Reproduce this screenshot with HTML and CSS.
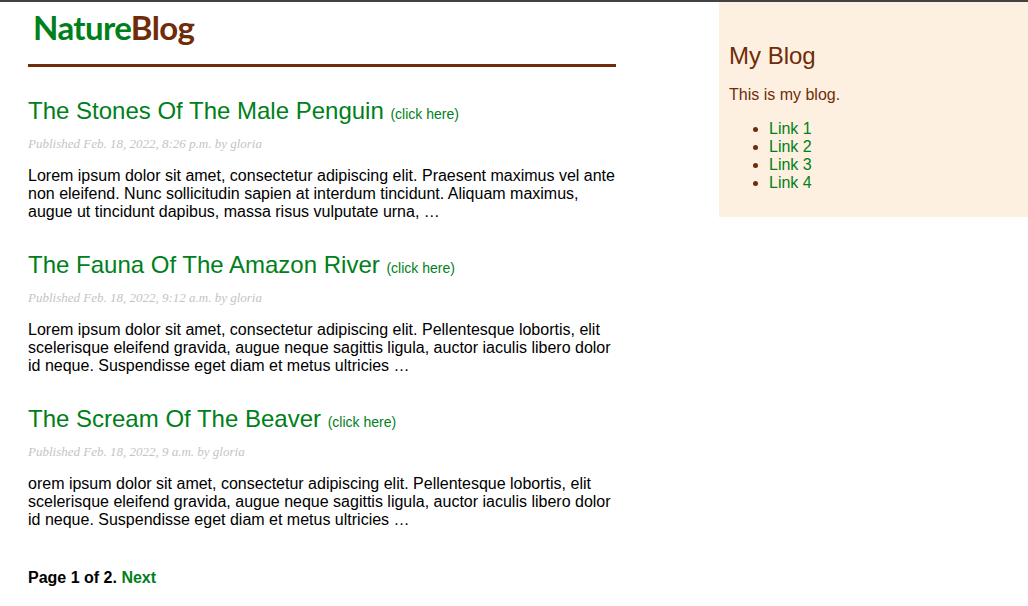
FILE: index.html
```html
<!DOCTYPE html>
<html>
<head>
<meta charset="utf-8">
<title>NatureBlog</title>
<link rel="stylesheet" href="styles.css">
</head>
<body>
<div class="page">
  <main class="content">
    <header class="masthead">
      <span class="logo"><span class="logo-nature">Nature</span><span class="logo-blog">Blog</span></span>
    </header>

    <article class="post">
      <h2 class="post-title"><a href="#">The Stones Of The Male Penguin</a> <a class="more" href="#">(click here)</a></h2>
      <p class="date">Published Feb. 18, 2022, 8:26 p.m. by gloria</p>
      <p class="excerpt">Lorem ipsum dolor sit amet, consectetur adipiscing elit. Praesent maximus vel ante non eleifend. Nunc sollicitudin sapien at interdum tincidunt. Aliquam maximus, augue ut tincidunt dapibus, massa risus vulputate urna, …</p>
    </article>

    <article class="post">
      <h2 class="post-title"><a href="#">The Fauna Of The Amazon River</a> <a class="more" href="#">(click here)</a></h2>
      <p class="date">Published Feb. 18, 2022, 9:12 a.m. by gloria</p>
      <p class="excerpt">Lorem ipsum dolor sit amet, consectetur adipiscing elit. Pellentesque lobortis, elit scelerisque eleifend gravida, augue neque sagittis ligula, auctor iaculis libero dolor id neque. Suspendisse eget diam et metus ultricies …</p>
    </article>

    <article class="post">
      <h2 class="post-title"><a href="#">The Scream Of The Beaver</a> <a class="more" href="#">(click here)</a></h2>
      <p class="date">Published Feb. 18, 2022, 9 a.m. by gloria</p>
      <p class="excerpt">orem ipsum dolor sit amet, consectetur adipiscing elit. Pellentesque lobortis, elit scelerisque eleifend gravida, augue neque sagittis ligula, auctor iaculis libero dolor id neque. Suspendisse eget diam et metus ultricies …</p>
    </article>

    <div class="pagination">Page 1 of 2. <a href="#">Next</a></div>
  </main>

  <aside class="sidebar">
    <h2 class="side-title">My Blog</h2>
    <p class="side-text">This is my blog.</p>
    <ul class="side-links">
      <li><a href="#">Link 1</a></li>
      <li><a href="#">Link 2</a></li>
      <li><a href="#">Link 3</a></li>
      <li><a href="#">Link 4</a></li>
    </ul>
  </aside>
</div>
</body>
</html>
```

FILE: styles.css
```css
html, body {
  margin: 0;
  padding: 0;
}

body {
  font-family: "Liberation Sans", Arial, Helvetica, sans-serif;
  font-size: 16px;
  color: #000;
  background: #fff;
  border-top: 2px solid #424242;
}

a {
  color: #00801a;
  text-decoration: none;
}

.page {
  display: flex;
  align-items: flex-start;
}

.content {
  width: 588px;
  margin-left: 28px;
}

.masthead {
  height: 62px;
  border-bottom: 3px solid #702c08;
  padding-left: 5px;
}

.logo {
  display: block;
  font-family: "Lato", "Open Sans", sans-serif;
  font-weight: 700;
  font-size: 33px;
  line-height: 50px;
  letter-spacing: -0.6px;
}

.logo-nature { color: #00801a; }
.logo-blog { color: #702c08; }

.post {
  margin-top: 30px;
}

.post + .post {
  margin-top: 30px;
}

.post-title {
  margin: 0;
  font-weight: normal;
  font-size: 24px;
  line-height: 28px;
}

.post-title .more {
  font-size: 14px;
}

.date {
  margin: 9px 0 16px;
  font-family: "Liberation Serif", Georgia, serif;
  font-style: italic;
  font-size: 13px;
  line-height: 14px;
  color: #c4c4c4;
}

.excerpt {
  margin: 0;
  line-height: 18px;
}

.pagination {
  margin: 40px 0;
  font-weight: bold;
  line-height: 18px;
}

.sidebar {
  margin-left: auto;
  width: 309px;
  box-sizing: border-box;
  padding: 40px 10px 25px 10px;
  background: #fdf0e1;
  color: #702c08;
}

.side-title {
  margin: 0;
  font-weight: normal;
  font-size: 24px;
  line-height: 28px;
}

.side-text {
  margin: 16px 0 0;
  line-height: 18px;
}

.side-links {
  margin: 16px 0 0;
  padding-left: 40px;
  line-height: 18px;
}
```
